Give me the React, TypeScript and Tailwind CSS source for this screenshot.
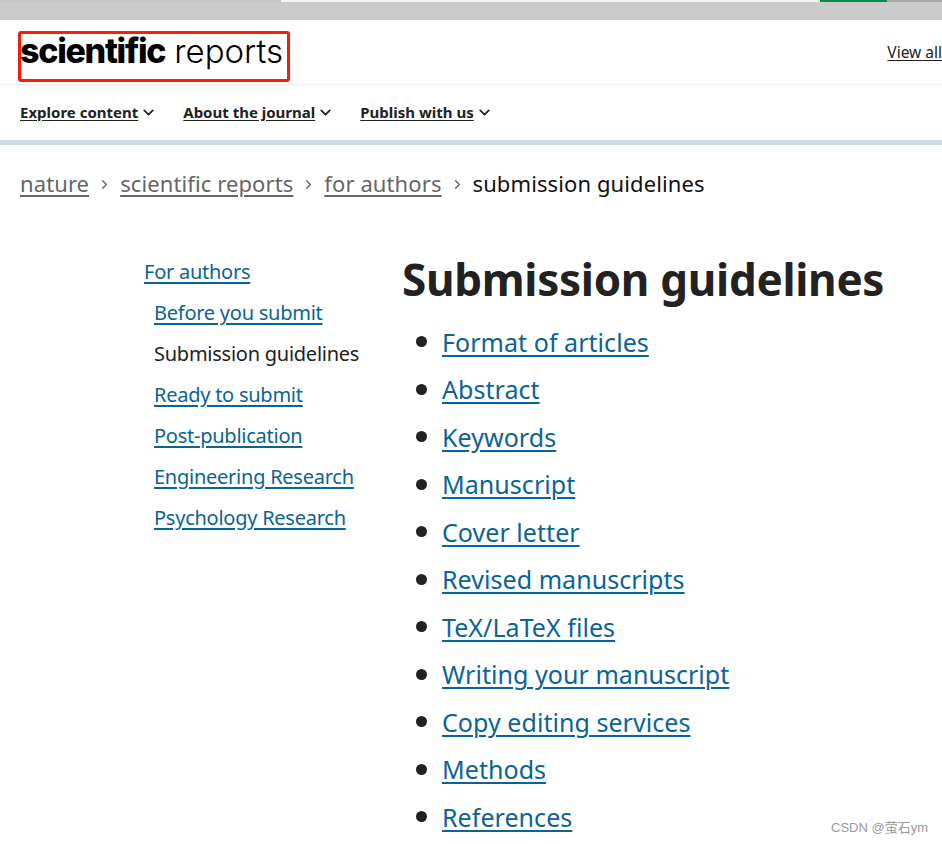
import React from "react";
import { ChevronDown, ChevronRight } from "lucide-react";

const F = { fontFamily: '"Noto Sans", "Open Sans", sans-serif' };
const side = ["Before you submit", "Submission guidelines", "Ready to submit", "Post-publication", "Engineering Research", "Psychology Research"];
const items = ["Format of articles", "Abstract", "Keywords", "Manuscript", "Cover letter", "Revised manuscripts", "TeX/LaTeX files", "Writing your manuscript", "Copy editing services", "Methods", "References"];
const crumbs = ["nature", "scientific reports", "for authors"];
const nav: [string, string][] = [["Explore content", "mr-[26px]"], ["About the journal", "mr-[26px]"], ["Publish with us", ""]];

export default function App() {
  return (
    <div className="relative w-[942px] h-[844px] overflow-hidden bg-white text-[#222222]" style={F}>
      <div className="h-[20px] bg-[#cbcbcb] flex items-start">
        <div className="w-[281px] h-[2px] bg-[#c6c6c6]" />
        <div className="w-[539px] h-[2px] bg-[#f4f4f4]" />
        <div className="w-[67px] h-[2px] bg-[#0f8a4a]" />
        <div className="flex-1 h-[2px] bg-[#a8a8a8]" />
      </div>

      <div className="h-[65px] border-b border-[#ececec] flex items-start justify-between pl-[18px] pt-[11px]">
        <div className="w-[272px] h-[51px] border-[3px] border-[#fb1a10] rounded-[3px] flex items-start whitespace-nowrap text-black" style={{ fontFamily: '"Inter", sans-serif' }}>
          <span className="text-[34px] leading-[34px] font-extrabold tracking-[-1.3px] -ml-[1px]">scientific</span>
          <span className="text-[33px] leading-[34px] font-light ml-[9px]">reports</span>
        </div>
        <a className="mt-[11px] text-[15.5px] leading-[20px] underline underline-offset-2 whitespace-nowrap text-[#222222] shrink-0">View all</a>
      </div>

      <div className="h-[55px] flex items-center pl-[20px] pb-[1px]">
        {nav.map(([t, m]) => (
          <div key={t} className={`flex items-center ${m}`}>
            <a className="text-[15px] leading-[20px] font-bold underline underline-offset-2 whitespace-nowrap">{t}</a>
            <ChevronDown className="ml-[2px] w-[17px] h-[17px]" strokeWidth={2.5} />
          </div>
        ))}
      </div>
      <div className="h-[5px] bg-[#cedbe4]" />

      <div className="flex items-center pl-[20px] h-[30px] mt-[23px] text-[22px] leading-[30px] whitespace-nowrap tracking-[0.1px]">
        {crumbs.map((c) => (
          <React.Fragment key={c}>
            <a className="text-[#666666] underline underline-offset-3 decoration-2">{c}</a>
            <ChevronRight className="mx-[8px] w-[15px] h-[15px] mt-[3px] text-[#666666]" strokeWidth={2.25} />
          </React.Fragment>
        ))}
        <span className="text-[#111111]">submission guidelines</span>
      </div>

      <div className="flex pl-[144px] pt-[51px]">
        <div className="w-[258px] shrink-0 pt-[10px]">
          <a className="block text-[20px] leading-[26px] text-[#0a6496] underline underline-offset-3 decoration-2 tracking-[-0.25px]">For authors</a>
          <div className="pl-[10px] flex flex-col gap-[15px] mt-[15px]">
            {side.map((s) => s === "Submission guidelines" ? (
              <span key={s} className="text-[20px] leading-[26px] tracking-[-0.25px] text-[#222222] whitespace-nowrap">{s}</span>
            ) : (
              <a key={s} className="text-[20px] leading-[26px] tracking-[-0.25px] text-[#0a6496] underline underline-offset-3 decoration-2 whitespace-nowrap">{s}</a>
            ))}
          </div>
        </div>
        <div className="flex-1 min-w-0">
          <h1 className="text-[44px] leading-[60px] font-bold text-[#222222] whitespace-nowrap tracking-[-0.3px]">Submission guidelines</h1>
          <ul className="mt-[9px] pl-[14px] flex flex-col">
            {items.map((i) => (
              <li key={i} className="flex items-center h-[47.5px]">
                <span className="w-[11px] h-[11px] rounded-full bg-[#222222] mr-[15px] shrink-0" />
                <a className="text-[25px] leading-[34px] text-[#0a6496] underline underline-offset-3 decoration-2 whitespace-nowrap tracking-[0.05px]">{i}</a>
              </li>
            ))}
          </ul>
        </div>
      </div>

      <div className="absolute left-[831px] top-[819px] text-[13px] leading-[18px] text-[#9a9a9a] whitespace-nowrap" style={{ fontFamily: '"Liberation Sans", "Noto Sans CJK SC", sans-serif' }}>CSDN @萤石ym</div>
    </div>
  );
}
